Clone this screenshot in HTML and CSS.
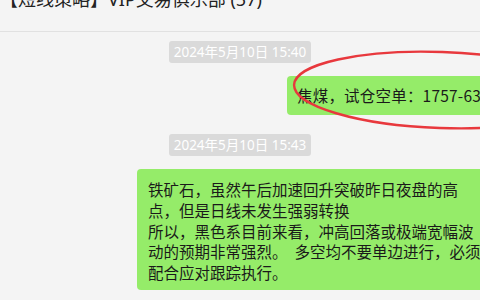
FILE: index.html
```html
<!DOCTYPE html>
<html lang="zh-CN">
<head>
    <meta charset="UTF-8">
    <meta name="viewport" content="width=device-width, initial-scale=1.0">
    <title>【短线策略】VIP交易俱乐部</title>
    <link rel="stylesheet" href="styles.css">
</head>
<body>
    <div class="chat">
        <div class="chat-header">
            <div class="chat-title">【短线策略】VIP交易俱乐部 (57)</div>
        </div>

        <div class="chat-body">
            <div class="time-row"><span class="time">2024年5月10日 15:40</span></div>

            <div class="msg msg-first">
                <div class="bubble">焦煤，试仓空单：1757-63</div>
                <!-- 红色圈注 -->
                <svg class="mark" width="320" height="90" viewBox="0 0 320 90">
                    <ellipse cx="150" cy="44" rx="147" ry="38" fill="none" stroke="#e8383d" stroke-width="2.4" transform="rotate(2 150 44)"/>
                </svg>
            </div>

            <div class="time-row"><span class="time">2024年5月10日 15:43</span></div>

            <div class="msg msg-second">
                <div class="bubble">铁矿石，虽然午后加速回升突破昨日夜盘的高<br>点，但是日线未发生强弱转换<br>所以，黑色系目前来看，冲高回落或极端宽幅波<br>动的预期非常强烈。&nbsp; 多空均不要单边进行，必须<br>配合应对跟踪执行。</div>
            </div>
        </div>
    </div>
</body>
</html>
```

FILE: styles.css
```css
* {
    margin: 0;
    padding: 0;
    box-sizing: border-box;
}

html, body {
    width: 480px;
    height: 300px;
    overflow: hidden;
}

body {
    font-family: 'Noto Sans', 'Noto Sans CJK SC', sans-serif;
    background-color: #f4f4f4;
    color: #1a1a1a;
}

.chat {
    width: 480px;
    height: 300px;
    overflow: hidden;
}

.chat-header {
    height: 32px;
    border-bottom: 1px solid #e1e1e1;
    overflow: hidden;
}

.chat-title {
    margin-top: -10px;
    font-size: 18px;
    line-height: 18px;
    white-space: nowrap;
    color: #222;
}

.chat-body {
    display: flex;
    flex-direction: column;
}

.time-row {
    display: flex;
    justify-content: center;
}

.time {
    background-color: #dadada;
    color: #fff;
    font-size: 13.5px;
    line-height: 22px;
    height: 22px;
    padding: 0 5px;
    border-radius: 3px;
    white-space: nowrap;
}

.chat-body .time-row:first-child {
    margin-top: 9px;
}

.msg {
    position: relative;
    display: flex;
    white-space: nowrap;
}

.bubble {
    background-color: #95ec69;
    border-radius: 4px;
    font-family: 'Noto Sans CJK SC', sans-serif;
    font-size: 15.5px;
    line-height: 20.75px;
    padding: 9px 12px 9px 10px;
}

.msg-first {
    margin-top: 13px;
    margin-bottom: 19px;
    padding-left: 287px;
}

.msg-first .bubble {
    height: 39px;
    padding-right: 30px;
    letter-spacing: 0.2px;
}

.msg-second {
    margin-top: 13px;
    padding-left: 137px;
}

.msg-second .bubble {
    padding: 10px 12px 7px 11px;
}

.mark {
    position: absolute;
    left: 291px;
    top: -30px;
}
```
